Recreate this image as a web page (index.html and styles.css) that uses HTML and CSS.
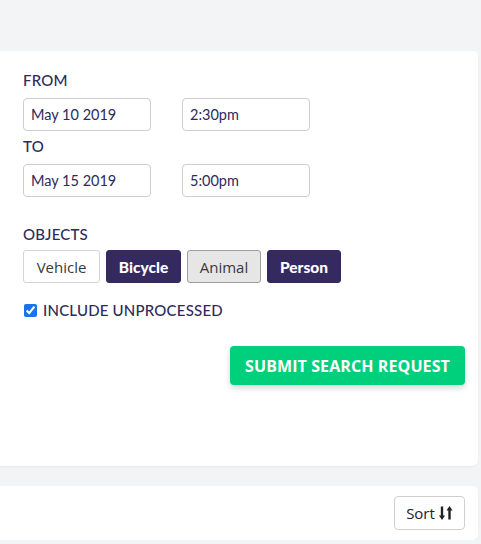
FILE: index.html
```html
<!DOCTYPE html>
<html>
<head>
<meta charset="utf-8">
<link rel="stylesheet" href="styles.css">
</head>
<body>
<div class="page">
  <section class="card search">
    <div class="label">FROM</div>
    <div class="row">
      <div class="field">May 10 2019</div>
      <div class="field">2:30pm</div>
    </div>
    <div class="label">TO</div>
    <div class="row">
      <div class="field">May 15 2019</div>
      <div class="field">5:00pm</div>
    </div>
    <div class="label objects">OBJECTS</div>
    <div class="chips">
      <button class="chip">Vehicle</button>
      <button class="chip on">Bicycle</button>
      <button class="chip hover">Animal</button>
      <button class="chip on">Person</button>
    </div>
    <label class="check"><input type="checkbox" checked> INCLUDE UNPROCESSED</label>
    <div class="actions">
      <button class="submit">SUBMIT SEARCH REQUEST</button>
    </div>
  </section>
  <section class="card results">
    <button class="sort">Sort
      <svg width="14" height="16" viewBox="0 0 14 16" aria-hidden="true">
        <path d="M3 1.5v10" stroke="#222" stroke-width="2.4" fill="none"/>
        <path d="M0 10.5h6L3 15z" fill="#222"/>
        <path d="M10.5 14.5v-10" stroke="#222" stroke-width="2.4" fill="none"/>
        <path d="M7.5 5.5h6L10.5 1z" fill="#222"/>
      </svg>
    </button>
  </section>
</div>
</body>
</html>
```
FILE: styles.css
```css
html, body { margin: 0; padding: 0; }
body {
  background: #f3f4f6;
  font-family: Lato, "Open Sans", sans-serif;
  color: #2e2a5b;
}
.page {
  padding-top: 51px;
  display: flex;
  flex-direction: column;
  gap: 20px;
}
.card {
  background: #fff;
  margin-left: -6px;
  width: 484px;
  box-sizing: border-box;
  border-radius: 5px;
  box-shadow: 0 1px 2px rgba(0,0,0,0.05);
}
.search {
  height: 415px;
  padding: 19px 13px 0 29px;
}
.label {
  font-size: 15px;
  line-height: 20px;
  font-weight: 500;
  letter-spacing: 0.2px;
  margin-bottom: 8px;
}
.label.objects { margin-top: 27px; margin-bottom: 6px; }
.row {
  display: flex;
  gap: 31px;
  margin-bottom: 5px;
}
.field {
  width: 128px;
  height: 33px;
  box-sizing: border-box;
  border: 1px solid #cdcdd2;
  border-radius: 4px;
  padding: 0 7px;
  font-size: 14.5px;
  line-height: 31px;
  color: #2e2a5b;
}
.chips {
  display: flex;
  gap: 6px;
}
.chip {
  height: 33px;
  box-sizing: border-box;
  border: 1px solid #d4d4d4;
  border-radius: 3px;
  background: #fff;
  font-family: "Open Sans", sans-serif;
  font-size: 15px;
  color: #3a3a3a;
  padding: 0;
}
.chip:nth-child(1) { width: 77px; }
.chip:nth-child(2) { width: 75px; }
.chip:nth-child(3) { width: 74px; }
.chip:nth-child(4) { width: 74px; }
.chip.on {
  background: #352a60;
  border-color: #352a60;
  color: #fff;
  font-family: Lato, sans-serif;
  font-weight: 900;
  font-size: 15.5px;
}
.chip.hover {
  background: #e6e6e6;
  border-color: #9f9f9f;
}
.check {
  display: flex;
  align-items: center;
  gap: 6px;
  margin-top: 17px;
  font-size: 15px;
  line-height: 20px;
  font-weight: 500;
  letter-spacing: 0.2px;
}
.check input {
  margin: 0 0 0 1px;
  width: 13px;
  height: 13px;
  accent-color: #1a73e8;
}
.actions {
  display: flex;
  justify-content: flex-end;
  margin-top: 26px;
}
.submit {
  width: 235px;
  height: 39px;
  border: none;
  border-radius: 4px;
  background: #00cf7b;
  color: #fff;
  font-family: "Open Sans", sans-serif;
  font-weight: 700;
  font-size: 16px;
  letter-spacing: 0.1px;
  box-shadow: 0 3px 6px rgba(0,0,0,0.16);
}
.results {
  height: 54px;
  display: flex;
  justify-content: flex-end;
  align-items: center;
  padding-right: 13px;
}
.sort {
  width: 71px;
  height: 34px;
  box-sizing: border-box;
  background: #fff;
  border: 1px solid #cfcfcf;
  border-radius: 4px;
  font-family: "Open Sans", sans-serif;
  font-size: 15px;
  color: #222;
  display: flex;
  align-items: center;
  justify-content: center;
  gap: 4px;
  padding: 0;
}
```
